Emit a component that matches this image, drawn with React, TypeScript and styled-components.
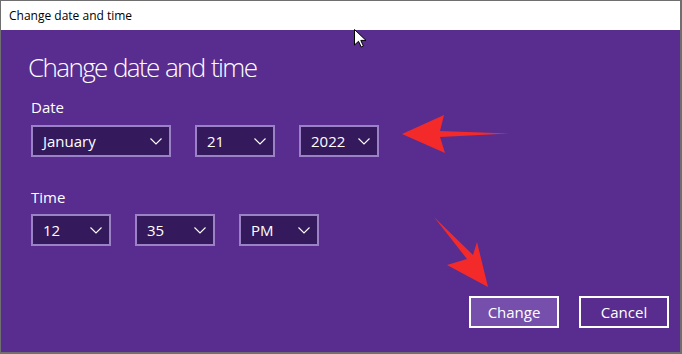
import React from "react";
import styled, { createGlobalStyle } from "styled-components";

const GlobalStyle = createGlobalStyle`
  html, body {
    margin: 0;
    padding: 0;
    background: #582d8f;
  }
  * {
    box-sizing: border-box;
  }
`;

const StyledWindow = styled.div`
  position: relative;
  width: 682px;
  height: 354px;
  display: flex;
  flex-direction: column;
  border: 1px solid #6f6f6f;
  border-right-width: 2px;
  border-bottom-width: 2px;
  font-family: "Open Sans", "Noto Sans", sans-serif;
  overflow: hidden;
`;

const StyledTitleBar = styled.div`
  height: 29px;
  flex: none;
  display: flex;
  align-items: center;
  padding-left: 8px;
  background: #ffffff;
  color: #000000;
  font-size: 12px;
  padding-bottom: 1px;
`;

const StyledBody = styled.div`
  flex: 1;
  display: flex;
  flex-direction: column;
  background: #582d8f;
  color: #ffffff;
  padding: 21px 11px 0 30px;
`;

const StyledHeading = styled.h1`
  margin: 0 0 14px -3px;
  font-size: 26px;
  font-weight: 300;
  line-height: 32px;
  letter-spacing: -1.6px;
  word-spacing: 1px;
`;

const StyledLabel = styled.div<{ $gap: number }>`
  font-size: 15px;
  line-height: 20px;
  margin-bottom: ${(p) => p.$gap}px;
`;

const StyledRow = styled.div<{ $gap: number }>`
  display: flex;
  gap: ${(p) => p.$gap}px;
`;

const StyledSelect = styled.div<{ $width: number }>`
  width: ${(p) => p.$width}px;
  height: 32px;
  display: flex;
  align-items: center;
  justify-content: space-between;
  padding: 0 7px 0 10px;
  background: #341a5c;
  border: 2px solid #9b82c6;
  font-size: 15px;
  color: #ffffff;
`;

const StyledSection = styled.div<{ $top: number }>`
  margin-top: ${(p) => p.$top}px;
`;

const StyledFooter = styled.div`
  display: flex;
  justify-content: flex-end;
  gap: 20px;
  margin-top: 50px;
`;

const StyledButton = styled.button<{ $primary?: boolean }>`
  width: 90px;
  height: 32px;
  border: 2px solid #ffffff;
  background: ${(p) => (p.$primary ? "#754fab" : "#582d8f")};
  color: #ffffff;
  font-family: inherit;
  font-size: 15px;
  padding: 0 0 1px;
`;

const StyledOverlay = styled.svg`
  position: absolute;
  left: -1px;
  top: -1px;
  pointer-events: none;
`;

const Chevron = () => (
  <svg width="12" height="7" viewBox="0 0 12 7">
    <path d="M0.5 0.5 L6 6 L11.5 0.5" fill="none" stroke="#ffffff" strokeWidth="1.1" />
  </svg>
);

const Select = (props: { value: string; width: number }) => (
  <StyledSelect $width={props.width}>
    <span>{props.value}</span>
    <Chevron />
  </StyledSelect>
);

const App = (): JSX.Element => {
  return (
    <React.Fragment>
      <GlobalStyle />
      <StyledWindow>
        <StyledTitleBar>Change date and time</StyledTitleBar>
        <StyledBody>
          <StyledHeading>Change date and time</StyledHeading>
          <StyledLabel $gap={8}>Date</StyledLabel>
          <StyledRow $gap={24}>
            <Select value="January" width={140} />
            <Select value="21" width={80} />
            <Select value="2022" width={80} />
          </StyledRow>
          <StyledSection $top={30}>
            <StyledLabel $gap={7}>Time</StyledLabel>
            <StyledRow $gap={24}>
              <Select value="12" width={80} />
              <Select value="35" width={80} />
              <Select value="PM" width={80} />
            </StyledRow>
          </StyledSection>
          <StyledFooter>
            <StyledButton $primary>Change</StyledButton>
            <StyledButton>Cancel</StyledButton>
          </StyledFooter>
        </StyledBody>
        <StyledOverlay width="682" height="354" viewBox="0 0 682 354">
          <polygon points="402,134 444,115 440,131 509,133.5 440,137 445,153" fill="#f42a2a" />
          <polygon points="434,217 473,255 477,242 488,287 447,265 467,259" fill="#f42a2a" />
          <path
            d="M354.5 29.5 L354.5 45 L358.5 41.3 L361.2 47 L363.4 46 L360.8 40.4 L366 40.4 Z"
            fill="#ffffff"
            stroke="#000000"
            strokeWidth="1"
            strokeLinejoin="miter"
          />
        </StyledOverlay>
      </StyledWindow>
    </React.Fragment>
  );
};

export default App;
